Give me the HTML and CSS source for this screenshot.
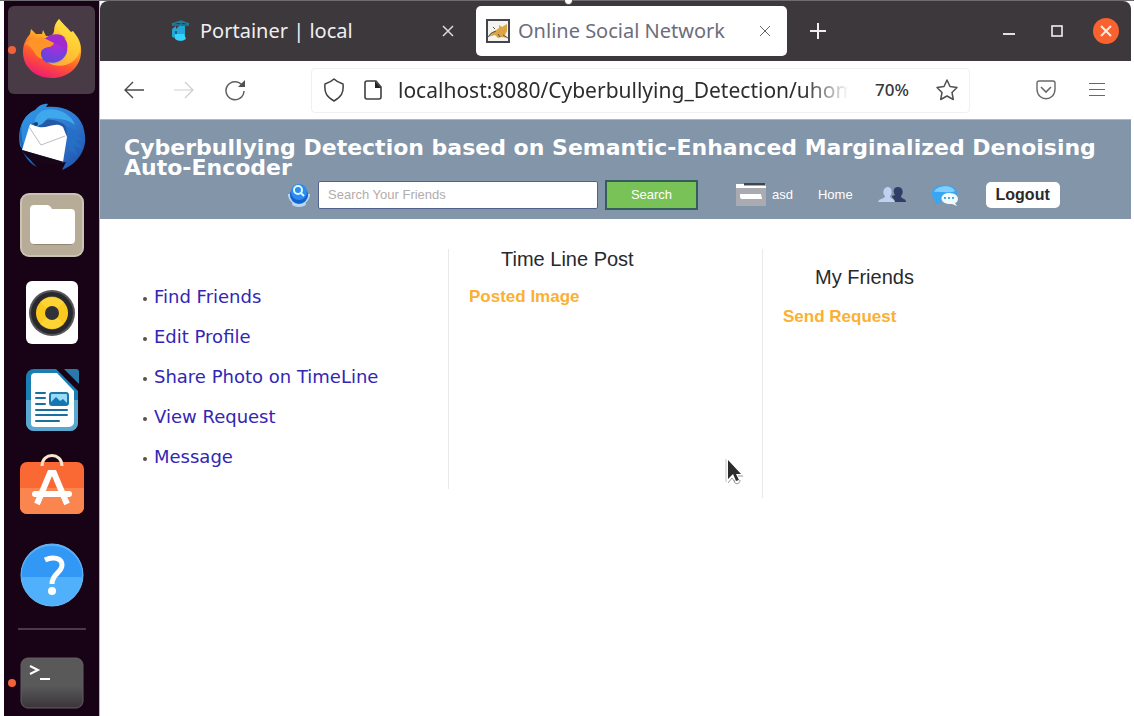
FILE: index.html
```html
<!DOCTYPE html>
<html lang="en">
<head>
<meta charset="utf-8">
<title>Online Social Network</title>
<link rel="stylesheet" href="styles.css">
</head>
<body>
<div class="desktop">
  <nav class="dock" aria-label="Dock">
    <ul class="dock-apps">
      <li><button class="app active" aria-label="Firefox">
        <svg width="64" height="64" viewBox="0 0 64 64">
          <defs>
            <linearGradient id="ff" x1=".75" y1="0" x2=".35" y2="1"><stop offset="0" stop-color="#fff34a"/><stop offset=".38" stop-color="#ffae25"/><stop offset=".68" stop-color="#ff5b2c"/><stop offset="1" stop-color="#f01c70"/></linearGradient>
            <radialGradient id="fp" cx=".6" cy=".3" r=".7"><stop offset="0" stop-color="#b12bd8"/><stop offset="1" stop-color="#5b48df"/></radialGradient>
          </defs>
          <path d="M39 1c3 4 8 8 12 13l2-1c6 8 9 15 8 22-1 15-14 25-29 25C15 60 3 49 3 34c0-8 3-13 7-18l1-5 5 5 6 0 1-4 3 6c4 0 7 0 8-5 0-5 2-9 5-12z" fill="url(#ff)"/>
          <circle cx="33" cy="32" r="14" fill="url(#fp)"/>
          <path d="M26 20c7-6 17-4 21 1l-3-1c4 4 4 9 2 14-3-6-8-8-14-9z" fill="#a029d0"/>
          <path d="M5 26c5-6 13-7 19-6l10 5c-1 4-6 4-9 5-5 2-5 7-2 11-10-2-8-12-18-15z" fill="#ff9428"/>
          <path d="M39 1c-4 7-1 12 4 17 6 6 7 13 2 20-4 6-11 8-18 6 12 8 29 3 33-11 2-9-2-14-7-19l-2 1c-4-5-9-9-12-14z" fill="#ffdb3c" opacity=".65"/>
        </svg></button></li>
      <li><button class="app" aria-label="Thunderbird">
        <svg width="70" height="70" viewBox="0 0 70 70">
          <defs><linearGradient id="tb" x1="0" y1="0" x2="1" y2="1"><stop offset="0" stop-color="#2e9be8"/><stop offset=".55" stop-color="#2f78d0"/><stop offset="1" stop-color="#1c4ea8"/></linearGradient></defs>
          <path d="M18 8c4-5 9-7 13-6l-2 3c17-2 32 5 37 19l1 4c5 18-6 34-22 40l4-8C32 64 8 58 7 49L3 44C0 27 6 13 18 8z" fill="url(#tb)"/>
          <path d="M5 22C3 36 6 53 20 65 7 59-1 40 5 22z" fill="#1d64b5"/>
          <path d="M12 23c9-4 18-9 33-2 5 2 6 9 4 16L25 43z" fill="#2558a5"/>
          <path d="M13 22l9 3c8 2 17-6 24 0l4 10-4 25L5 48z" fill="#fff"/>
          <path d="M12 25l12 18 24-9" fill="none" stroke="#b8bdc4"/>
          <path d="M5 48l42 12c-13 5-34 4-42-12z" fill="#180517"/>
          <path d="M27 8c14-3 27 4 31 15-9-7-18-6-27-7-4 4-7 9-14 8 0-7 3-13 10-16z" fill="#3fa7ec"/>
          <circle cx="19" cy="22" r="2" fill="#174276"/>
          <path d="M49 24l17 8-9-1 10 8-10-2 9 9-10-2 5 10-9-6" fill="#2470c6" opacity=".8"/>
        </svg></button></li>
      <li><button class="app" aria-label="Files">
        <svg width="64" height="64" viewBox="0 0 64 64"><rect x="1" y="1" width="62" height="62" rx="8" fill="#b6ac98" stroke="#cac2b2" stroke-width="2"/><path d="M10 17a5 5 0 015-5h12l5 4h18a5 5 0 015 5v26a5 5 0 01-5 5H15a5 5 0 01-5-5z" fill="#8f8676"/><path d="M10 16a4 4 0 014-4h13q3 0 5 4h19a4 4 0 014 4v27a4 4 0 01-4 4H14a4 4 0 01-4-4z" fill="#fff"/></svg></button></li>
      <li><button class="app" aria-label="Rhythmbox">
        <svg width="64" height="64" viewBox="0 0 64 64"><rect x="6" width="52" height="63" rx="6" fill="#fff"/><circle cx="32" cy="32" r="23" fill="#55555a"/><circle cx="32" cy="32" r="21" fill="#29292d"/><circle cx="32" cy="32" r="16" fill="#fbc91d"/><path d="M32 32L20 21a16 16 0 0124 0zm0 0l12 11a16 16 0 01-24 0z" fill="#ffe04a" opacity=".5"/><circle cx="32" cy="32" r="7" fill="#303237"/></svg></button></li>
      <li><button class="app" aria-label="LibreOffice Writer">
        <svg width="64" height="64" viewBox="0 0 64 64"><path d="M14 1h22l22 22v32a8 8 0 01-8 8H14a8 8 0 01-8-8V9a8 8 0 018-8z" fill="#1b7fb5"/><path d="M6 32h52v23a8 8 0 01-8 8H14a8 8 0 01-8-8z" fill="#5aa7d0"/><path d="M15 5h22l17 18v31a5 5 0 01-5 5H15a4 4 0 01-4-4V9a4 4 0 014-4z" fill="#fff"/><path d="M44 1h12a3 3 0 013 3v12z" fill="#2a79ab"/><path d="M16 25h9M16 30h9M16 36h9M16 42h31M16 47h31M16 53h23" stroke="#1b6f9f" stroke-width="2" stroke-linecap="round"/><rect x="30" y="25" width="18" height="12" rx="2" fill="#9adcf8" stroke="#1c79ab" stroke-width="2"/><path d="M31 37v-3l5-5 4 4 3-2 5 5v1z" fill="#1377b4"/></svg></button></li>
      <li><button class="app" aria-label="Ubuntu Software">
        <svg width="64" height="68" viewBox="0 0 64 68"><rect y="8" width="64" height="52" rx="7" fill="#fa6833"/><path d="M0 34h64v19a7 7 0 01-7 7H7a7 7 0 01-7-7z" fill="#fb854e"/><path d="M22 12C22-2 42-2 42 12" fill="none" stroke="#f7e4ce" stroke-width="3"/><path d="M17 50l13-31h4l13 31" fill="none" stroke="#fff" stroke-width="6"/><path d="M15 40h34" stroke="#fff" stroke-width="6" stroke-linecap="round"/></svg></button></li>
      <li><button class="app" aria-label="Help">
        <svg width="64" height="64" viewBox="0 0 64 64"><circle cx="32" cy="32" r="31" fill="#50b0fb"/><path d="M1 34a31 31 0 0162 0z" fill="#3198f5"/><circle cx="32" cy="32" r="31" fill="none" stroke="#6bbcf8"/><path d="M25 17c8-4 17-2 17 5 0 8-10 8-10 19" fill="none" stroke="#fff" stroke-width="5"/><circle cx="32" cy="48" r="4" fill="#fff"/></svg></button></li>
    </ul>
    <hr class="dock-rule">
    <button class="app terminal" aria-label="Terminal">
      <svg width="64" height="52" viewBox="0 0 64 52"><defs><linearGradient id="tm" x2="0" y2="1"><stop offset=".55" stop-color="#59595a"/><stop offset="1" stop-color="#3a353b"/></linearGradient></defs><rect x="1" y="1" width="62" height="50" rx="7" fill="url(#tm)" stroke="#625f62"/><path d="M10 9l8 4-8 4" fill="none" stroke="#fff" stroke-width="2"/><path d="M20 22h10" stroke="#fff" stroke-width="2"/></svg>
    </button>
  </nav>

  <div class="browser">
    <div class="tabs">
      <div class="tab">
        <svg width="20" height="22" viewBox="0 0 20 22"><path d="M2 4l9-3 8 3M2 5h17M11 1v7" fill="none" stroke="#217d9c" stroke-width="1.5"/><path d="M2 9l4-3v3l3-3h6v12c0 4-9 4-10 0l-3-1z" fill="#23a7d8"/><path d="M5 14h9l2 5q-5 3-11 0z" fill="#35d2ff"/><path d="M5 11h2v3H5z" fill="#1b5f7c"/></svg>
        <span class="tab-title">Portainer | local</span>
        <button class="tab-close" aria-label="Close tab"><svg width="12" height="12" viewBox="0 0 12 12"><path d="M1 1l10 10M11 1L1 11" stroke="currentColor" stroke-width="1.5"/></svg></button>
      </div>
      <div class="tab current">
        <svg width="24" height="24" viewBox="0 0 24 24"><rect x="1" y="1" width="22" height="22" fill="#f4f3ee" stroke="#44444c" stroke-width="2"/><path d="M2 18q2-5 7-6l4-3 0-3 3 2 5-3 0 7-2 4 2 3-5-1-4 1-3-3z" fill="#dca444"/><path d="M2 18q3-5 8-6M12 15l2 3M17 16l5 3M7 8l2 2" stroke="#555" fill="none"/></svg>
        <span class="tab-title">Online Social Network</span>
        <button class="tab-close" aria-label="Close tab"><svg width="12" height="12" viewBox="0 0 12 12"><path d="M1 1l10 10M11 1L1 11" stroke="currentColor"/></svg></button>
      </div>
      <button class="new-tab" aria-label="New tab"><svg width="18" height="18" viewBox="0 0 18 18"><path d="M9 1v16M1 9h16" stroke="currentColor" stroke-width="2"/></svg></button>
      <div class="window-controls">
        <button aria-label="Minimize"><svg width="14" height="14" viewBox="0 0 14 14"><path d="M1 10h12" stroke="#e2e0e2" stroke-width="2"/></svg></button>
        <button aria-label="Maximize"><svg width="14" height="14" viewBox="0 0 14 14"><rect x="2" y="2" width="10" height="10" fill="none" stroke="#f0eef0" stroke-width="1.6"/></svg></button>
        <button aria-label="Close window"><svg width="28" height="28" viewBox="0 0 28 28"><circle cx="14" cy="14" r="13" fill="#f9612e"/><path d="M9 9l10 10M19 9L9 19" stroke="#ffeadb" stroke-width="2"/></svg></button>
      </div>
    </div>

    <div class="toolbar">
      <div class="history">
        <button aria-label="Back"><svg width="20" height="18" viewBox="0 0 20 18"><path d="M20 9H1M9 1L1 9l8 8" fill="none" stroke="#4a4a4d" stroke-width="1.4"/></svg></button>
        <button aria-label="Forward" disabled><svg width="20" height="18" viewBox="0 0 20 18"><path d="M0 9h19M11 1l8 8-8 8" fill="none" stroke="#cdcdcf" stroke-width="1.2"/></svg></button>
        <button aria-label="Reload"><svg width="22" height="22" viewBox="0 0 22 22"><path d="M18 6a9 9 0 102 6" fill="none" stroke="#606063" stroke-width="1.5"/><path d="M21 1v7h-7z" fill="#505053"/></svg></button>
      </div>
      <div class="address">
        <svg width="20" height="24" viewBox="0 0 20 24"><path d="M10 1c3 3 6 4 9 5 1 9-2 13-9 17C3 19 0 15 1 6c3-1 6-2 9-5z" fill="none" stroke="#404043" stroke-width="1.5" stroke-linejoin="round"/></svg>
        <svg class="page-icon" width="18" height="20" viewBox="0 0 18 20"><path d="M3 1h9l5 6v10a2 2 0 01-2 2H3a2 2 0 01-2-2V3a2 2 0 012-2z" fill="none" stroke="#404043" stroke-width="1.6"/><path d="M11 1v7h6z" fill="#222"/></svg>
        <input class="url" type="text" aria-label="Address" value="localhost:8080/Cyberbullying_Detection/uhome.jsp">
        <button class="zoom">70%</button>
        <button aria-label="Bookmark this page"><svg width="24" height="24" viewBox="0 0 24 24"><path d="M12 2l3 6.500 7 1-5 5 1.300 7L12 18l-6.300 3.500 1.300-7-5-5 7-1z" fill="none" stroke="#505053" stroke-width="1.500" stroke-linejoin="round"/></svg></button>
      </div>
      <div class="tools">
        <button aria-label="Save to Pocket"><svg width="22" height="20" viewBox="0 0 22 20"><path d="M4 1h14a2 2 0 012 2v6c0 13-18 13-18 0V3a2 2 0 012-2z" fill="none" stroke="#68686b" stroke-width="1.400"/><path d="M6 7l5 5 5-5" fill="none" stroke="#68686b" stroke-width="1.600"/></svg></button>
        <button aria-label="Open menu"><svg width="18" height="16" viewBox="0 0 18 16"><path d="M1 1.500h16M1 7.500h16M1 13.500h16" stroke="#68686b" stroke-width="1.200"/></svg></button>
      </div>
    </div>

    <header class="site-header">
      <h1>Cyberbullying Detection based on Semantic-Enhanced Marginalized Denoising Auto-Encoder</h1>
      <div class="site-bar">
        <form class="search">
          <label for="q" aria-label="Search friends"><svg width="24" height="26" viewBox="0 0 24 26"><path d="M2 12a10 10 0 0020 0" fill="none" stroke="#b9d8f2" stroke-width="2"/><ellipse cx="12" cy="22" rx="7" ry="3" fill="#b9d8f2"/><circle cx="12" cy="13" r="9" fill="#1262d2"/><circle cx="12" cy="10" r="8" fill="#2c8cf0"/><circle cx="11" cy="8" r="4" fill="none" stroke="#dcfaff" stroke-width="2"/><path d="M14 11l3 3" stroke="#dcfaff" stroke-width="2"/></svg></label>
          <input id="q" type="text" placeholder="Search Your Friends">
          <button class="go" type="button">Search</button>
        </form>
        <nav class="site-nav">
          <a class="profile" href="#"><svg width="30" height="24" viewBox="0 0 30 24"><path d="M0 1h30v22H0z" fill="#aaabb0"/><path d="M0 1h8v2h22v2H0z" fill="#fff"/><path d="M8 0h21v2H8z" fill="#3e454d"/><path d="M4 11h21l1 5H6q-2 0-2-2z" fill="#fff"/></svg>asd</a>
          <a href="#">Home</a>
          <a href="#" aria-label="Friends"><svg width="28" height="17" viewBox="0 0 28 17"><path d="M10 1c4 0 5 7 2 9 0 3 4 2 5 6H0c1-4 7-3 7-6-3-2-2-9 3-9z" fill="#bed1f2"/><path d="M20 1c5 0 6 6 3 9 0 3 5 2 5 6H17c0-3-3-4-3-6l3-1c-2-3-2-8 3-8z" fill="#303d66"/></svg></a>
          <a href="#" aria-label="Messages"><svg width="28" height="24" viewBox="0 0 28 24"><path d="M13 2C5 2 1 6 1 11c0 4 2 6 4 7l-1 4 6-3c10 1 16-3 16-9 0-5-5-8-13-8z" fill="#38a6f5"/><path d="M3 9c3-7 18-8 21-1-6 3-14 0-21 1z" fill="#84ceff"/><path d="M18 10c10 0 11 8 6 10l2 3-5-2c-14 1-13-11-3-11z" fill="#f0faff"/><path d="M13 15h2m2 0h2m2 0h2" stroke="#4bacdf" stroke-width="2"/></svg></a>
          <button class="logout">Logout</button>
        </nav>
      </div>
    </header>

    <main class="columns">
      <ul class="menu">
        <li><a href="#">Find Friends</a></li>
        <li><a href="#">Edit Profile</a></li>
        <li><a href="#">Share Photo on TimeLine</a></li>
        <li><a href="#">View Request</a></li>
        <li><a href="#">Message</a></li>
      </ul>
      <section class="panel timeline">
        <h2>Time Line Post</h2>
        <p>Posted Image</p>
      </section>
      <section class="panel friends">
        <h2>My Friends</h2>
        <p>Send Request</p>
      </section>
    </main>
  </div>
  <span class="handle"></span>
  <svg class="pointer" width="20" height="28" viewBox="0 0 20 28"><path d="M1 1v23" fill="none" stroke="#c4c4c4"/><path d="M3 2v19l5-5 3 7 3-1-3-6h5z" fill="#2c2c2e"/><path d="M3 25l4-5 3 4M9 22c0 5 6 5 6 0M13 18h5" fill="none" stroke="#999"/></svg>
</div>
</body>
</html>
```

FILE: styles.css
```css
* { box-sizing: border-box; }
body { margin: 0; background: #fff; font-family: "Liberation Sans", Arial, sans-serif; }
button { padding: 0; border: 0; background: none; color: inherit; font: inherit; display: flex; align-items: center; justify-content: center; }
svg { display: block; flex: none; }
a { text-decoration: none; color: inherit; }
ul { margin: 0; padding: 0; list-style: none; }

.desktop { position: relative; display: flex; min-height: 100vh; padding: 0 3px 0 4px; border-top: 1px solid #6e6c6e; }

.dock { width: 96px; flex: none; padding: 5px 4px 0; background: #180316; border-right: 1px solid #b9b3ba; }
.dock-apps { display: flex; flex-direction: column; height: 613px; }
.dock-apps li { flex: 1; }
.app { position: relative; width: 100%; height: 100%; border-radius: 6px; }
.app.active { background: #483b46; }
.app.active::before, .app.terminal::before { content: ""; position: absolute; left: 0; top: 40px; width: 8px; height: 8px; border-radius: 50%; background: #f0623a; }
.dock-rule { width: 68px; height: 2px; margin: 9px auto 26px; border: 0; background: #4a3a49; }
.app.terminal { height: 54px; }
.app.terminal::before { top: 23px; }

.browser { flex: 1; min-width: 0; background: #fff; }
.tabs { display: flex; align-items: center; height: 60px; background: #3d383b; border-radius: 8px 8px 0 0; font: 20px/28px "Noto Sans", sans-serif; color: #f0eff0; }
.tab { display: flex; align-items: center; gap: 10px; width: 376px; height: 50px; padding: 0 22px 0 70px; }
.tab-title { flex: 1; white-space: nowrap; }
.tab-close { color: #dddbdd; }
.tab.current { width: 311px; padding: 0 16px 0 10px; gap: 8px; border-radius: 5px; background: #fff; color: #6c6d7c; }
.tab.current .tab-close { color: #66666a; }
.new-tab { margin-left: 22px; }
.window-controls { display: flex; align-items: center; gap: 34px; margin-left: auto; padding-right: 11px; }

.window-controls button:last-child { margin-left: -6px; }

.toolbar { display: flex; align-items: center; height: 58px; }
.history { display: flex; align-items: center; gap: 30px; width: 211px; padding-left: 24px; }
.address { display: flex; align-items: center; flex: 1; min-width: 0; height: 45px; padding: 0 10px 0 12px; border: 1px solid #f0f0f1; border-radius: 4px; }
.page-icon { margin: 0 16px 0 20px; }
.url { flex: 1; min-width: 0; padding: 0; border: 0; background: none; color: #2d2d30; font: 21px/28px "Noto Sans", sans-serif; -webkit-mask-image: linear-gradient(to right, #000 90%, transparent); mask-image: linear-gradient(to right, #000 90%, transparent); }
.zoom { margin: 0 26px; font: 500 17px/24px "Noto Sans", sans-serif; color: #38383b; }
.tools { display: flex; align-items: center; justify-content: space-between; width: 161px; padding: 0 25px 0 65px; }

.site-header { padding: 18px 4px 10px 24px; background: #8295a9; border-top: 1px solid #aab7cc; color: #fff; }
.site-header h1 { margin: 0; font: bold 22px/20px "DejaVu Sans", sans-serif; }
.site-bar { display: flex; align-items: center; gap: 38px; height: 31px; padding: 2px 0 0 163px; }
.search { display: flex; align-items: center; gap: 7px; }
.search input { width: 280px; height: 28px; padding: 0 9px; border: 1px solid #53628c; border-radius: 2px; background: #fff; font: 13px/20px "Liberation Sans", Arial, sans-serif; }
.search input::placeholder { color: #b3acac; opacity: 1; }
.go { width: 93px; height: 30px; border: 2px solid #345d5c; background: #79c257; font-size: 13px; }
.site-nav { display: flex; align-items: center; gap: 25px; font-size: 13px; }
.profile { display: flex; align-items: center; gap: 6px; }
.logout { width: 74px; height: 26px; margin-left: 2px; border-radius: 5px; background: #fff; color: #2a2a2c; font-size: 16px; font-weight: bold; }

.columns { display: grid; grid-template-columns: 348fr 314fr 369fr; align-items: start; padding-top: 30px; }
.menu { padding: 28px 0 0 43px; font: 18px/40px "DejaVu Sans", sans-serif; color: #3226b4; }
.menu li { display: flex; align-items: center; gap: 7px; }
.menu li::before { content: ""; width: 4px; height: 4px; margin-top: 4px; border-radius: 50%; background: #5c5248; }
.panel { border-left: 1px solid #e8eaea; }
.panel h2 { margin: 0; padding-left: 52px; font-size: 20px; line-height: 20px; font-weight: normal; color: #29292c; }
.panel p { margin: 0; padding-left: 20px; font-size: 17px; line-height: 20px; font-weight: bold; color: #fbb034; }
.timeline { min-height: 240px; }
.timeline p { padding-top: 18px; }
.friends { min-height: 249px; padding-top: 18px; }
.friends p { padding-top: 20px; }

.handle { position: absolute; left: 564px; top: -6px; width: 9px; height: 10px; border: 1px solid #555; border-radius: 50%; background: #fff; }
.pointer { position: absolute; left: 725px; top: 457px; }
```
